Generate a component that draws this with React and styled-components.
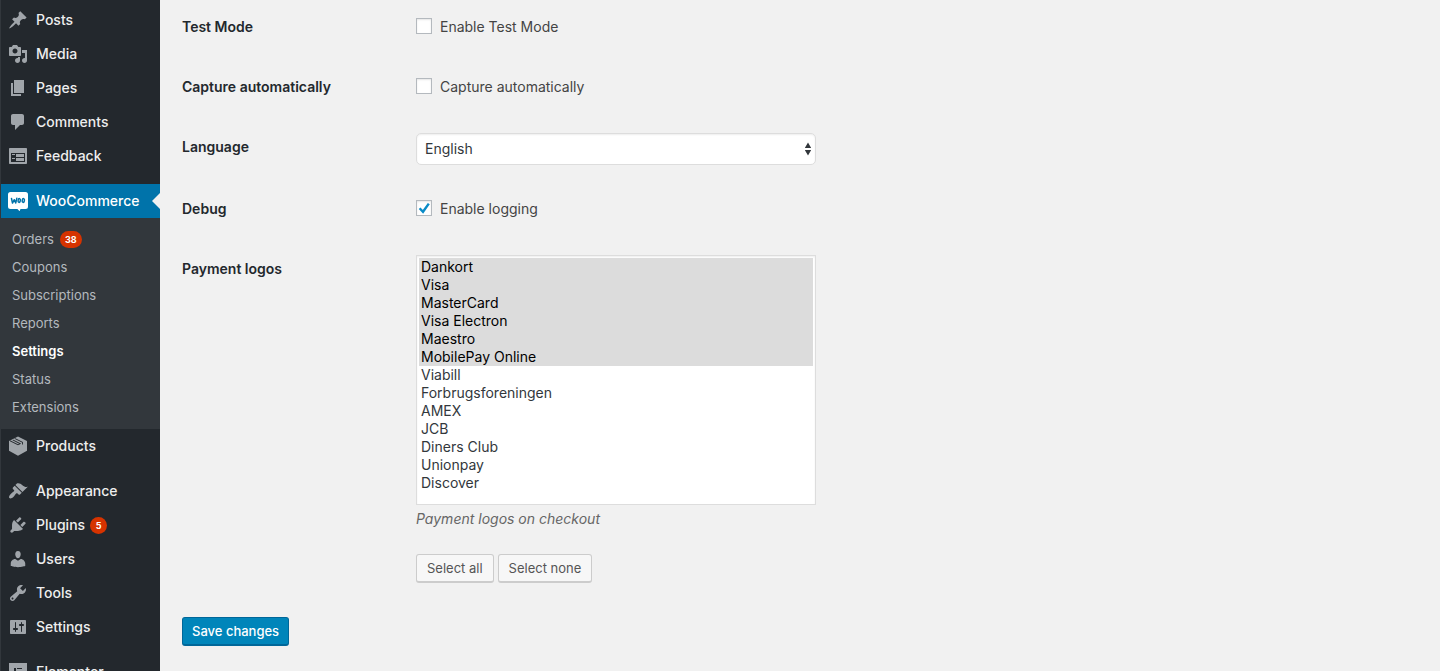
import React, { useState } from 'react';
import styled, { createGlobalStyle, css } from 'styled-components';

const GlobalStyle = createGlobalStyle`
  *, *::before, *::after { box-sizing: border-box; }
  body {
    margin: 0;
    background: #f1f1f1;
    color: #444;
    font-family: Inter, "Liberation Sans", sans-serif;
    font-size: 14px;
    line-height: 20px;
  }
`;

const Shell = styled.div`
  display: flex;
  height: 100vh;
  overflow: hidden;
`;

const Menu = styled.nav`
  flex: 0 0 160px;
  padding-top: 3px;
  overflow: hidden;
  background: #23282d;
  border-left: 1px solid #32373c;
`;

const MenuGroup = styled.ul`
  list-style: none;
  margin: 0 0 11px;
  padding: 0;
`;

const MenuLink = styled.a`
  position: relative;
  display: flex;
  align-items: center;
  gap: 8px;
  height: 34px;
  padding-left: 7px;
  color: ${(p) => (p.$current ? '#fff' : '#eee')};
  font-weight: 500;
  text-decoration: none;
  white-space: nowrap;
  ${(p) =>
    p.$current &&
    css`
      background: #0073aa;
      &::after {
        content: '';
        position: absolute;
        top: 9px;
        right: 0;
        border: 8px solid transparent;
        border-left: 0;
        border-right-color: #f1f1f1;
      }
    `}
`;

const MenuIcon = styled.svg`
  flex: none;
  width: 20px;
  height: 20px;
  fill: ${(p) => (p.$current ? '#fff' : '#a0a5aa')};
`;

const SubMenu = styled.ul`
  list-style: none;
  margin: 0;
  padding: 7px 0 8px;
  background: #32373c;
`;

const SubLink = styled.a`
  display: flex;
  align-items: center;
  height: 28px;
  padding-left: 11px;
  color: ${(p) => (p.$current ? '#fff' : '#b4b9be')};
  font-size: 13px;
  font-weight: ${(p) => (p.$current ? 600 : 400)};
  text-decoration: none;
`;

const Badge = styled.span`
  display: inline-block;
  min-width: 17px;
  height: 17px;
  margin-left: ${(p) => (p.$sub ? '6px' : '-3px')};
  padding: 0 5px;
  border-radius: 9px;
  background: #d63300;
  color: #fff;
  font-size: 9px;
  font-weight: 700;
  line-height: 17px;
  text-align: center;
`;

const Content = styled.main`
  flex: 1;
  min-width: 0;
  padding: 13px 22px;
`;

const Form = styled.form`
  display: flex;
  flex-direction: column;
  gap: 30px;
`;

const Row = styled.div`
  display: grid;
  grid-template-columns: 234px minmax(0, 1fr);
  min-height: 30px;
`;

const RowTitle = styled.label`
  padding-top: 4px;
  color: #23282d;
  font-weight: 600;
`;

const CheckLabel = styled.label`
  display: flex;
  align-items: center;
  gap: 8px;
  height: 28px;
`;

const Checkbox = styled.input`
  appearance: none;
  flex: none;
  width: 16px;
  height: 16px;
  margin: 0 0 2px;
  border: 1px solid #b4b9be;
  background: #fff;
  box-shadow: inset 0 1px 2px rgba(0, 0, 0, 0.1);
  &:checked {
    background: #fff
      url("data:image/svg+xml,%3Csvg xmlns='http://www.w3.org/2000/svg' viewBox='0 0 14 14'%3E%3Cpath fill='none' stroke='%230a8bc7' stroke-width='2.4' d='M2.6 7.2l3.400 3.600L11.800 2.600'/%3E%3C/svg%3E")
      center / 14px 14px no-repeat;
  }
`;

const fieldStyle = css`
  width: 100%;
  max-width: 400px;
  margin: 0;
  border: 1px solid #ddd;
  background: #fff;
  box-shadow: inset 0 1px 2px rgba(0, 0, 0, 0.07);
  color: #32373c;
  font: inherit;
`;

const Select = styled.select`
  ${fieldStyle}
  appearance: none;
  height: 32px;
  padding: 0 24px 0 8px;
  border-radius: 5px;
  background: #fff
    url("data:image/svg+xml,%3Csvg xmlns='http://www.w3.org/2000/svg' viewBox='0 0 8 14'%3E%3Cpath fill='%2332373c' d='M4 0.5L7.2 6H0.8zM4 13.5L0.8 8h6.4z'/%3E%3C/svg%3E")
    right 3px center / 8px 14px no-repeat;
`;

const ListBox = styled.select`
  ${fieldStyle}
  display: block;
  height: 250px;
  padding: 2px;
  border-radius: 0;
  overflow: hidden;
  outline: none;
  option {
    height: 18px;
    min-height: 18px;
    padding: 0 2px;
    line-height: 18px;
  }
  option:checked {
    background: #dcdcdc linear-gradient(#dcdcdc, #dcdcdc);
    color: #000;
    -webkit-text-fill-color: #000;
  }
`;

const Description = styled.p`
  margin: 4px 0 25px;
  color: #666;
  font-style: italic;
`;

const ButtonRow = styled.div`
  display: flex;
  gap: 4px;
`;

const Button = styled.button`
  height: 29px;
  padding: 0 ${(p) => (p.$primary ? '9px' : '10px')};
  border: 1px solid ${(p) => (p.$primary ? '#006799' : '#ccc')};
  border-bottom-width: 2px;
  border-radius: 3px;
  background: ${(p) => (p.$primary ? '#0085ba' : '#f7f7f7')};
  color: ${(p) => (p.$primary ? '#fff' : '#555')};
  font: inherit;
  font-size: 13px;
  font-weight: ${(p) => (p.$primary ? 500 : 400)};
  white-space: nowrap;
`;

const Actions = styled.div`
  margin-top: 4px;
`;

const ICONS = {
  post: 'M10.44 3.02l1.82-1.82 6.36 6.35-1.83 1.82c-1.05-.68-2.48-.57-3.41.36l-.75.75c-.92.93-1.04 2.35-.35 3.41l-1.83 1.82-2.41-2.41-2.8 2.79c-.42.42-3.38 2.71-3.8 2.29s1.86-3.39 2.28-3.81l2.79-2.79L4.1 9.36l1.83-1.82c1.05.69 2.48.57 3.4-.36l.75-.75c.93-.92 1.05-2.35.36-3.41z',
  media: 'M13 11V4c0-.55-.45-1-1-1h-1.67L9 1H5L3.67 3H2c-.55 0-1 .45-1 1v7c0 .55.45 1 1 1h10c.55 0 1-.45 1-1zM7 4.5c1.38 0 2.5 1.12 2.5 2.5S8.38 9.5 7 9.5 4.5 8.38 4.5 7 5.62 4.5 7 4.5zM14 6h5v10.5c0 1.38-1.12 2.5-2.5 2.5S14 17.88 14 16.5s1.12-2.5 2.5-2.5c.17 0 .34.02.5.05V9h-3V6zm-4 8.05V13h2v3.5c0 1.38-1.12 2.5-2.5 2.5S7 17.88 7 16.5 8.12 14 9.5 14c.17 0 .34.02.5.05z',
  page: 'M6 15V2h10v13H6zm-1 1h8v2H3V5h2v11z',
  comments: 'M5 2h9c1.1 0 2 .9 2 2v7c0 1.1-.9 2-2 2h-2l-5 5v-5H5c-1.1 0-2-.9-2-2V4c0-1.1.9-2 2-2z',
  feedback: 'M2 2h16c.55 0 1 .45 1 1v14c0 .55-.45 1-1 1H2c-.55 0-1-.45-1-1V3c0-.55.45-1 1-1zm15 14V7H3v9h14zM4 8v1h3V8H4zm4 0v3h8V8H8zm-4 4v1h3v-1H4zm4 0v3h8v-3H8z',
  products: 'M10 .4L19 4.900v9.800l-9 5-9-5V4.900zM1.900 5.200L10 9.300l3-1.500-.1-.2L5.400 3.800l-.9.5 6.800 3.400-1.300.6-7.600-3.700zM7.300 2.300l-.9.5 7.600 3.800v2.200l.9-.5V6.100z',
  appearance: 'M14.48 11.06L7.41 3.99l1.5-1.5c.5-.56 2.3-.47 3.51.32 1.21.8 1.43 1.28 2.91 2.1 1.18.64 2.45 1.26 4.45.85zm-.71.71L6.7 4.7 4.93 6.47c-.39.39-.39 1.02 0 1.41l1.06 1.06c.39.39.39 1.03 0 1.42-.6.6-1.43 1.11-2.21 1.69-.35.26-.7.53-1.01.84C1.43 14.23.4 16.08 1.4 17.07c.99 1 2.84-.03 4.18-1.36.31-.31.58-.66.85-1.02.57-.78 1.08-1.61 1.69-2.21.39-.39 1.02-.39 1.41 0l1.06 1.06c.39.39 1.02.39 1.41 0z',
  plugins: 'M13.11 4.36L9.87 7.6 8 5.73l3.24-3.24c.35-.34 1.05-.2 1.56.32.52.51.66 1.21.31 1.55zm-8 1.77l.91-1.12 9.01 9.01-1.19.84c-.71.71-2.63 1.16-3.82 1.16H6.14L4.9 17.26c-.59.59-1.54.59-2.12 0-.59-.58-.59-1.53 0-2.12l1.24-1.24v-3.88c0-1.13.4-3.19 1.09-3.89zm7.26 3.97l3.24-3.24c.34-.35 1.04-.21 1.55.31.52.51.66 1.21.31 1.55l-3.24 3.25z',
  users: 'M10 9.25c-2.27 0-2.73-3.44-2.73-3.44C7 4.02 7.82 2 9.97 2c2.16 0 2.98 2.02 2.71 3.81 0 0-.41 3.44-2.68 3.44zm0 2.57L12.72 10c2.39 0 4.52 2.33 4.52 4.53v2.49s-3.65 1.13-7.24 1.13c-3.65 0-7.24-1.13-7.24-1.13v-2.49c0-2.25 1.94-4.48 4.47-4.48z',
  tools: 'M16.68 9.77c-1.34 1.34-3.3 1.67-4.95.99l-5.41 6.52c-.99.99-2.59.99-3.58 0s-.99-2.59 0-3.57l6.52-5.42c-.68-1.65-.35-3.61.99-4.95 1.28-1.28 3.12-1.62 4.72-1.06l-2.89 2.89 2.82 2.82 2.86-2.87c.53 1.58.18 3.39-1.08 4.65zM3.81 16.21c.4.39 1.04.39 1.43 0 .4-.4.4-1.04 0-1.43-.39-.4-1.03-.4-1.43 0-.39.39-.39 1.03 0 1.43z',
  settings: 'M18 16V4c0-.55-.45-1-1-1H3c-.55 0-1 .45-1 1v12c0 .55.45 1 1 1h14c.55 0 1-.45 1-1zM8 11h1c.55 0 1 .45 1 1s-.45 1-1 1H8v1.5c0 .28-.22.5-.5.5s-.5-.22-.5-.5V13H6c-.55 0-1-.45-1-1s.45-1 1-1h1V5.5c0-.28.22-.5.5-.5s.5.22.5.5V11zm5-2h-1c-.55 0-1-.45-1-1s.45-1 1-1h1V5.5c0-.28.22-.5.5-.5s.5.22.5.5V7h1c.55 0 1 .45 1 1s-.45 1-1 1h-1v5.5c0 .28-.22.5-.5.5s-.5-.22-.5-.5V9z',
  elementor: 'M1 1h18v18H1zm5 5v8h2V6zm3 0v1h5V6zm0 3v2h5V9zm0 4v1h5v-1z',
};

function WooIcon() {
  return (
    <MenuIcon viewBox="0 0 20 20" $current aria-hidden="true">
      <path d="M2.5 1h15A2.5 2.5 0 0 1 20 3.5v12a2.5 2.5 0 0 1-2.500 2.500h-5l-.9 2.200L9.400 18H2.500A2.500 2.500 0 0 1 0 15.500v-12A2.500 2.500 0 0 1 2.500 1z" />
      <g fill="none" stroke="#0073aa" strokeWidth="1.5" strokeLinecap="round" strokeLinejoin="round">
        <path d="M3.500 7.500l1 4.600 1.800-3.400 1.400 3.300 1.100-4.700" />
        <ellipse cx="11.200" cy="9.500" rx="1.100" ry="1.900" transform="rotate(12 11.200 9.500)" />
        <ellipse cx="15.300" cy="9.500" rx="1.100" ry="1.900" transform="rotate(12 15.300 9.500)" />
      </g>
    </MenuIcon>
  );
}

function MenuItem({ icon, label, count, current, children }) {
  return (
    <li>
      <MenuLink href="#" $current={current}>
        {icon ? (
          <MenuIcon viewBox="0 0 20 20" aria-hidden="true">
            <path fillRule="evenodd" d={ICONS[icon]} />
          </MenuIcon>
        ) : (
          <WooIcon />
        )}
        {label}
        {count && <Badge>{count}</Badge>}
      </MenuLink>
      {children}
    </li>
  );
}

const SUB_ITEMS = ['Orders', 'Coupons', 'Subscriptions', 'Reports', 'Settings', 'Status', 'Extensions'];

const LOGOS = [
  'Dankort', 'Visa', 'MasterCard', 'Visa Electron', 'Maestro', 'MobilePay Online', 'Viabill',
  'Forbrugsforeningen', 'AMEX', 'JCB', 'Diners Club', 'Unionpay', 'Discover',
];

function CheckRow({ id, title, label, checked }) {
  return (
    <Row>
      <RowTitle htmlFor={id}>{title}</RowTitle>
      <CheckLabel>
        <Checkbox id={id} type="checkbox" defaultChecked={checked} />
        {label}
      </CheckLabel>
    </Row>
  );
}

export default function App() {
  const [logos, setLogos] = useState(LOGOS.slice(0, 6));
  return (
    <Shell>
      <GlobalStyle />
      <Menu aria-label="Main menu">
        <MenuGroup>
          <MenuItem icon="post" label="Posts" />
          <MenuItem icon="media" label="Media" />
          <MenuItem icon="page" label="Pages" />
          <MenuItem icon="comments" label="Comments" />
          <MenuItem icon="feedback" label="Feedback" />
        </MenuGroup>
        <MenuGroup>
          <MenuItem label="WooCommerce" current>
            <SubMenu>
              {SUB_ITEMS.map((item) => (
                <li key={item}>
                  <SubLink href="#" $current={item === 'Settings'}>
                    {item}
                    {item === 'Orders' && <Badge $sub>38</Badge>}
                  </SubLink>
                </li>
              ))}
            </SubMenu>
          </MenuItem>
          <MenuItem icon="products" label="Products" />
        </MenuGroup>
        <MenuGroup>
          <MenuItem icon="appearance" label="Appearance" />
          <MenuItem icon="plugins" label="Plugins" count="5" />
          <MenuItem icon="users" label="Users" />
          <MenuItem icon="tools" label="Tools" />
          <MenuItem icon="settings" label="Settings" />
        </MenuGroup>
        <MenuGroup>
          <MenuItem icon="elementor" label="Elementor" />
        </MenuGroup>
      </Menu>
      <Content>
        <Form onSubmit={(e) => e.preventDefault()}>
          <CheckRow id="test-mode" title="Test Mode" label="Enable Test Mode" />
          <CheckRow id="capture" title="Capture automatically" label="Capture automatically" />
          <Row>
            <RowTitle htmlFor="language">Language</RowTitle>
            <Select id="language" defaultValue="English">
              <option>English</option>
            </Select>
          </Row>
          <CheckRow id="debug" title="Debug" label="Enable logging" checked />
          <Row>
            <RowTitle htmlFor="logos">Payment logos</RowTitle>
            <div>
              <ListBox
                id="logos"
                multiple
                value={logos}
                onChange={(e) => setLogos(Array.from(e.target.selectedOptions, (o) => o.value))}
              >
                {LOGOS.map((logo) => (
                  <option key={logo} value={logo}>{logo}</option>
                ))}
              </ListBox>
              <Description>Payment logos on checkout</Description>
              <ButtonRow>
                <Button type="button" onClick={() => setLogos(LOGOS)}>Select all</Button>
                <Button type="button" onClick={() => setLogos([])}>Select none</Button>
              </ButtonRow>
            </div>
          </Row>
          <Actions>
            <Button type="submit" $primary>Save changes</Button>
          </Actions>
        </Form>
      </Content>
    </Shell>
  );
}
